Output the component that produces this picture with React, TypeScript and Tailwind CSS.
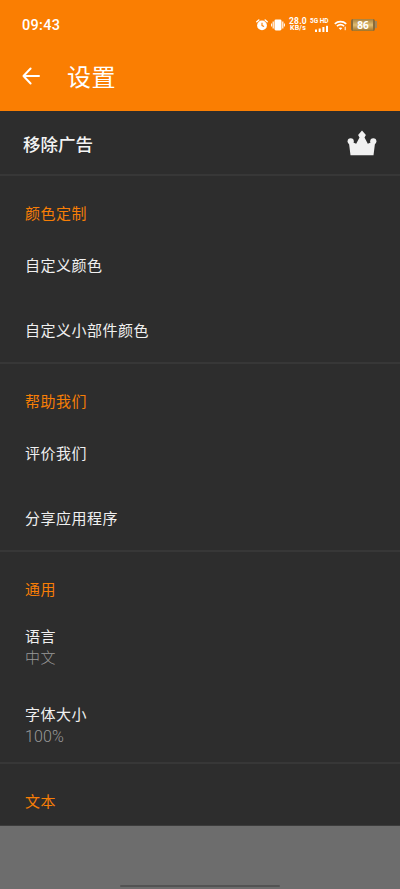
import React from 'react';

interface SettingItem {
    label: string;
    value?: string;
}

interface SettingSection {
    title: string;
    items: SettingItem[];
}

const sections: SettingSection[] = [
    { title: '颜色定制', items: [{ label: '自定义颜色' }, { label: '自定义小部件颜色' }] },
    { title: '帮助我们', items: [{ label: '评价我们' }, { label: '分享应用程序' }] },
    {
        title: '通用',
        items: [
            { label: '语言', value: '中文' },
            { label: '字体大小', value: '100%' },
        ],
    },
    { title: '文本', items: [] },
];

const StatusIcons: React.FC = () => (
    <div className="flex items-center text-white">
        {/* Alarm */}
        <svg className="w-3 h-3" viewBox="0 0 12 12" fill="none">
            <circle cx="6" cy="6.4" r="4.9" fill="currentColor" />
            <path d="M0.8 2.8 2.8 1M11.2 2.8 9.2 1" stroke="currentColor" strokeWidth="1.5" strokeLinecap="round" />
            <path d="M6 3.8V6.6L8.1 7.5" stroke="#fa7e02" strokeWidth="1.1" />
        </svg>
        {/* Vibrate */}
        <svg className="ml-[3px] w-[14px] h-3" viewBox="0 0 14 12" fill="none">
            <rect x="3.5" y="0.6" width="7" height="10.8" rx="1.4" fill="currentColor" />
            <path d="M2.2 2.6v6.8M11.8 2.6v6.8" stroke="currentColor" strokeWidth="1.2" />
            <path d="M0.6 4.5v3M13.4 4.5v3" stroke="currentColor" strokeWidth="1" />
        </svg>
        <div className="ml-[3px] w-[20px] flex flex-col items-center font-bold">
            <p className="h-[8px] text-[8.5px] leading-[8px] tracking-[0.2px] whitespace-nowrap">28.0</p>
            <p className="h-[7px] text-[7px] leading-[7px] tracking-[0.2px] whitespace-nowrap">KB/s</p>
        </div>
        <div className="ml-[2px] w-[20px]">
            <p className="text-[6.5px] leading-[7px] font-bold whitespace-nowrap">5G HD</p>
            <svg className="ml-[5px] w-[14px] h-[7px]" viewBox="0 0 14 7" fill="currentColor">
                <rect x="0" y="4.5" width="2" height="2.5" />
                <rect x="3.7" y="3.5" width="2" height="3.5" />
                <rect x="7.4" y="2" width="2" height="5" />
                <rect x="11" y="0.8" width="2" height="6.2" />
            </svg>
        </div>
        {/* Wifi */}
        <svg className="ml-[4px] mt-[2px] w-[13px] h-[11px]" viewBox="0 0 13 11" fill="none" stroke="currentColor">
            <path d="M0.8 3.8C4 0.8 9 0.8 12.2 3.8" strokeWidth="1.7" />
            <path d="M2.9 6.2C5 4.3 8 4.3 10.1 6.2" strokeWidth="1.6" />
            <path d="M4.6 8.1 6.5 10 8.4 8.1C7.3 7.2 5.7 7.2 4.6 8.1Z" fill="currentColor" stroke="none" />
            <path d="M11.2 6.6v3.6" strokeWidth="1" />
        </svg>
        {/* Battery */}
        <div className="ml-[4px] flex items-center">
            <div className="w-[24px] h-[12px] rounded-[2px] border-x-2 border-[#8a6a38] bg-linear-to-b from-[#a8803c] via-[#e0bd72] to-[#a17428] text-center text-[10px] leading-[12px] font-bold font-['Noto_Sans']">
                86
            </div>
            <div className="w-[2px] h-[7px] bg-[#a58658]" />
        </div>
    </div>
);

const CrownIcon: React.FC = () => (
    <svg className="w-[30px] h-[26px] text-[#f1f1f1]" viewBox="0 0 30 26" fill="currentColor">
        <circle cx="3.7" cy="11.3" r="3.1" />
        <circle cx="26.3" cy="11.3" r="3.1" />
        <path d="M15 0.6 18.9 4.9 17.5 7.6 20.8 13.8 25 12 28 13.2 26.5 25.3H3.5L2 13.2 5 12 9.2 13.8 12.5 7.6 11.1 4.9Z" />
    </svg>
);

const SettingRow: React.FC<SettingItem> = ({ label, value }) => {
    if (value) {
        return (
            <div className="h-[77.5px] pt-[20px]">
                <p className="leading-[21px] text-[#f0f0f0]">{label}</p>
                <p className="leading-[21px] font-light text-[#999999]">
                    {value.endsWith('%') ? <span className="text-[16px] tracking-[0.1px]">{value}</span> : value}
                </p>
            </div>
        );
    }

    return <div className="h-[65.5px] pt-[24.5px] leading-[21px] text-[#f0f0f0]">{label}</div>;
};

const App: React.FC = () => {
    return (
        <div className="w-full h-[889px] flex flex-col overflow-hidden bg-[#6d6d6d] font-[Roboto,'Noto_Sans_CJK_SC',sans-serif]">
            {/* Header */}
            <header className="h-[111px] shrink-0 bg-[#fa7e02] text-white">
                <div className="h-[49px] pl-[22px] pr-[23px] flex items-center justify-between">
                    <span className="pt-[2px] text-[14.5px] font-medium tracking-[0.3px]">09:43</span>
                    <StatusIcons />
                </div>
                <div className="h-[54px] pl-[22px] flex items-center">
                    <svg className="w-[18px] h-[18px]" viewBox="0 0 18 18" fill="none" stroke="currentColor" strokeWidth="2" strokeLinecap="round" strokeLinejoin="round">
                        <path d="M17 9H1.5M8.6 1.5 1.5 9 8.6 16.5" />
                    </svg>
                    <h1 className="ml-[27px] pt-[4px] text-[24px] leading-[30px] tracking-[0.4px]">设置</h1>
                </div>
            </header>

            {/* Settings list */}
            <main className="h-[715px] shrink-0 overflow-hidden bg-[#2d2d2d] border-b border-[#3c3c3c]">
                <div className="h-[63px] pl-[23px] pr-[23px] flex items-center justify-between">
                    <span className="pt-[5px] text-[17.5px] font-medium text-[#f4f4f4]">移除广告</span>
                    <CrownIcon />
                </div>

                {sections.map((section) => (
                    <section key={section.title} className="border-t-2 border-[#373737] pl-[25px] text-[15px] tracking-[0.5px]">
                        <h2 className="h-[55px] pt-[28px] leading-[21px] text-[#f77e06]">{section.title}</h2>
                        {section.items.map((item) => (
                            <SettingRow key={item.label} label={item.label} value={item.value} />
                        ))}
                    </section>
                ))}
            </main>

            {/* Gesture bar */}
            <footer className="flex-1 flex items-end justify-center">
                <div className="w-[160px] h-[2px] mb-[2px] rounded-full bg-[#535353]" />
            </footer>
        </div>
    );
};

export default App;
